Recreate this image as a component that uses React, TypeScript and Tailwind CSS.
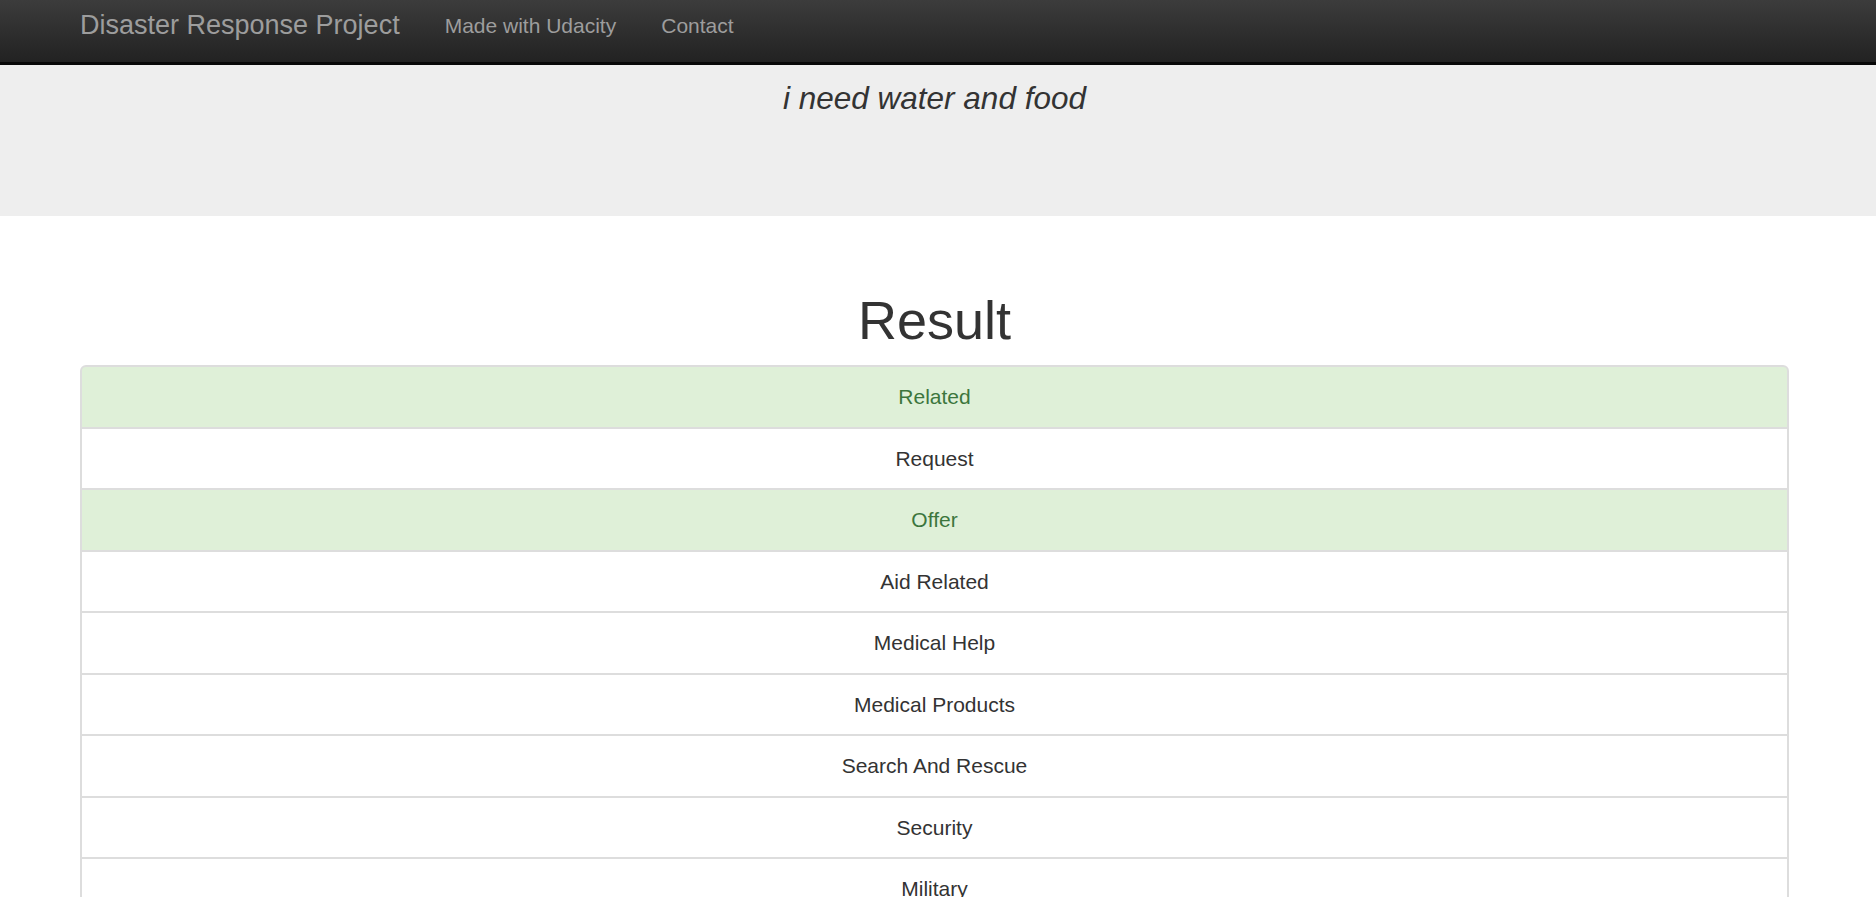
import React from 'react';

const categories: { name: string; hit: boolean }[] = [
  { name: 'Related', hit: true },
  { name: 'Request', hit: false },
  { name: 'Offer', hit: true },
  { name: 'Aid Related', hit: false },
  { name: 'Medical Help', hit: false },
  { name: 'Medical Products', hit: false },
  { name: 'Search And Rescue', hit: false },
  { name: 'Security', hit: false },
  { name: 'Military', hit: false },
  { name: 'Child Alone', hit: false },
  { name: 'Water', hit: true },
  { name: 'Food', hit: true },
  { name: 'Shelter', hit: false },
  { name: 'Clothing', hit: false },
  { name: 'Money', hit: false },
  { name: 'Missing People', hit: false },
  { name: 'Refugees', hit: false },
  { name: 'Death', hit: false },
  { name: 'Other Aid', hit: false },
  { name: 'Infrastructure Related', hit: false },
];

const App = () => {
  return (
    <div className="min-h-screen bg-white font-['Liberation_Sans',Arial,sans-serif] text-[#333]">
      {/* Navbar */}
      <nav className="h-[65px] border-b-[3px] border-[#080808] bg-linear-to-b from-[#3c3c3c] to-[#222222]">
        <div className="ml-[80px] w-[1709px] flex items-start gap-[45px]">
          <a className="pt-[10px] text-[27px] leading-[30px] text-[#9d9d9d]">Disaster Response Project</a>
          <a className="pt-[11px] text-[21px] leading-[30px] text-[#9d9d9d]">Made with Udacity</a>
          <a className="pt-[11px] text-[21px] leading-[30px] text-[#9d9d9d]">Contact</a>
        </div>
      </nav>

      {/* Query */}
      <div className="h-[151px] bg-[#eeeeee] pt-[11px]">
        <div className="ml-[80px] w-[1709px] text-center">
          <p className="text-[31.5px] leading-[45px] italic text-[#333]">i need water and food</p>
        </div>
      </div>

      {/* Result */}
      <div className="ml-[80px] w-[1709px] pt-[75px]">
        <h1 className="mb-[15px] text-center text-[54px] leading-[1.1] font-normal text-[#333]">Result</h1>
        <ul className="pb-[30px]">
          {categories.map((c) => (
            <li
              key={c.name}
              className={
                c.hit
                  ? 'text-center text-[21px] leading-[29.5px] py-[15px] border-2 border-[#dddddd] -mb-[2px] first:rounded-t-[6px] bg-[#dff0d8] text-[#3c763d]'
                  : 'text-center text-[21px] leading-[29.5px] py-[15px] border-2 border-[#dddddd] -mb-[2px] first:rounded-t-[6px] bg-white text-[#333]'
              }
            >
              {c.name}
            </li>
          ))}
        </ul>
      </div>
    </div>
  );
};

export default App;
